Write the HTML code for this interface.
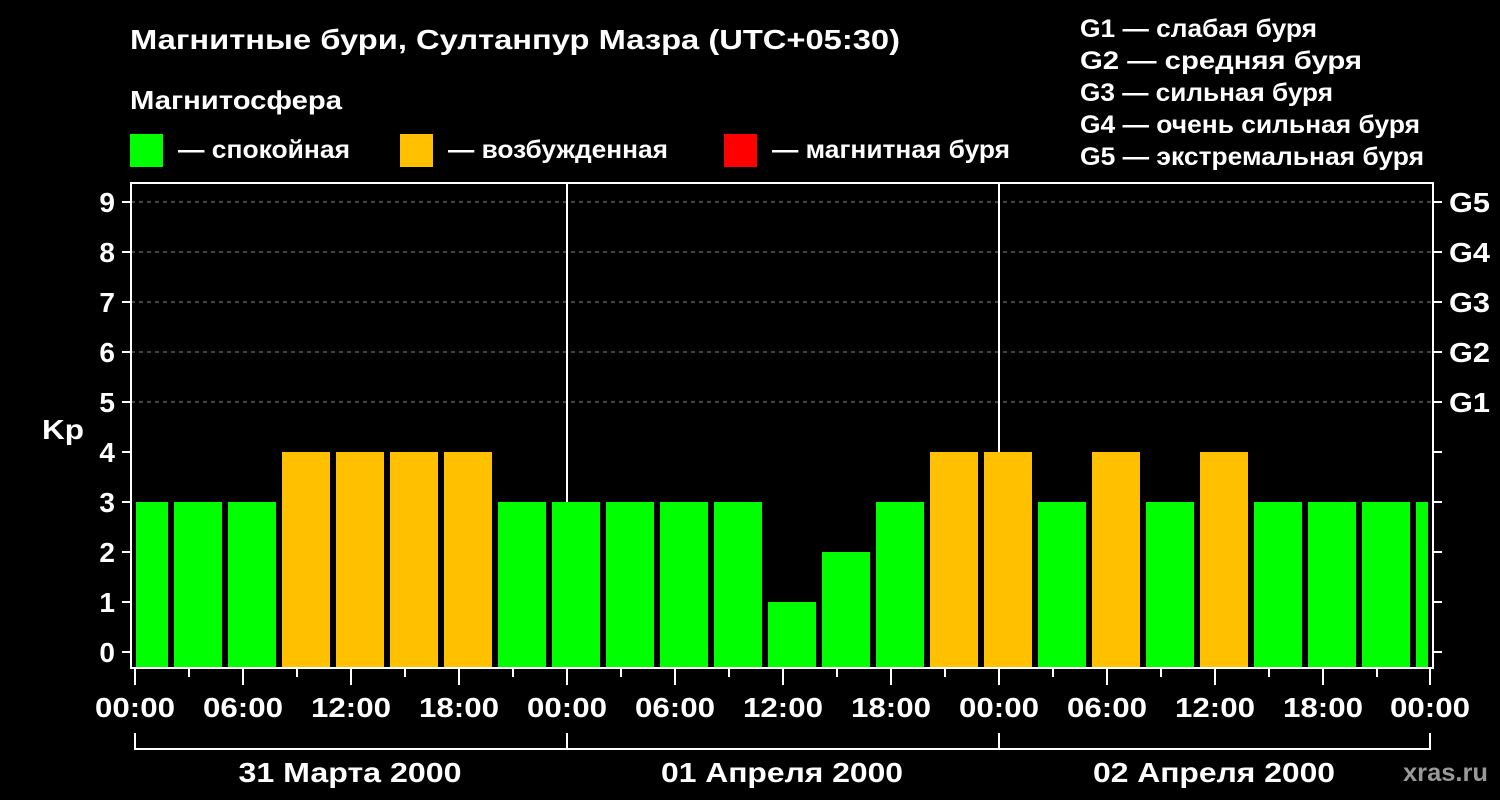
<!DOCTYPE html>
<html><head><meta charset="utf-8"><style>
html,body{margin:0;padding:0;background:#000;}
svg{display:block;font-family:"Liberation Sans",Arial,sans-serif;font-weight:bold;}
</style></head><body>
<svg width="1500" height="800" viewBox="0 0 1500 800" xmlns="http://www.w3.org/2000/svg">
<rect width="1500" height="800" fill="#000"/>
<text x="130" y="49" fill="#fff" font-size="28" textLength="770" lengthAdjust="spacingAndGlyphs">Магнитные бури, Султанпур Мазра (UTC+05:30)</text>
<text x="130" y="109" fill="#fff" font-size="26" textLength="212" lengthAdjust="spacingAndGlyphs">Магнитосфера</text>
<rect x="130" y="134" width="33" height="33" fill="#00ff00"/>
<text x="178" y="158" fill="#fff" font-size="25" textLength="172" lengthAdjust="spacingAndGlyphs">— спокойная</text>
<rect x="400" y="134" width="33" height="33" fill="#ffc000"/>
<text x="448" y="158" fill="#fff" font-size="25" textLength="220" lengthAdjust="spacingAndGlyphs">— возбужденная</text>
<rect x="724" y="134" width="33" height="33" fill="#ff0000"/>
<text x="772" y="158" fill="#fff" font-size="25" textLength="238" lengthAdjust="spacingAndGlyphs">— магнитная буря</text>
<g fill="#fff" font-size="25" lengthAdjust="spacingAndGlyphs">
<text x="1080" y="37" textLength="237" lengthAdjust="spacingAndGlyphs">G1 — слабая буря</text>
<text x="1080" y="69" textLength="282" lengthAdjust="spacingAndGlyphs">G2 — средняя буря</text>
<text x="1080" y="101" textLength="253" lengthAdjust="spacingAndGlyphs">G3 — сильная буря</text>
<text x="1080" y="133" textLength="340" lengthAdjust="spacingAndGlyphs">G4 — очень сильная буря</text>
<text x="1080" y="165" textLength="344" lengthAdjust="spacingAndGlyphs">G5 — экстремальная буря</text>
</g>
<g stroke="#888" stroke-dasharray="4,4" stroke-width="1">
<line x1="131" y1="202" x2="1433" y2="202"/><line x1="131" y1="252" x2="1433" y2="252"/>
<line x1="131" y1="302" x2="1433" y2="302"/><line x1="131" y1="352" x2="1433" y2="352"/>
<line x1="131" y1="402" x2="1433" y2="402"/>
</g>
<g>
<rect x="136" y="502" width="32" height="166" fill="#00ff00"/>
<rect x="174" y="502" width="48" height="166" fill="#00ff00"/>
<rect x="228" y="502" width="48" height="166" fill="#00ff00"/>
<rect x="282" y="452" width="48" height="216" fill="#ffc000"/>
<rect x="336" y="452" width="48" height="216" fill="#ffc000"/>
<rect x="390" y="452" width="48" height="216" fill="#ffc000"/>
<rect x="444" y="452" width="48" height="216" fill="#ffc000"/>
<rect x="498" y="502" width="48" height="166" fill="#00ff00"/>
<rect x="552" y="502" width="48" height="166" fill="#00ff00"/>
<rect x="606" y="502" width="48" height="166" fill="#00ff00"/>
<rect x="660" y="502" width="48" height="166" fill="#00ff00"/>
<rect x="714" y="502" width="48" height="166" fill="#00ff00"/>
<rect x="768" y="602" width="48" height="66" fill="#00ff00"/>
<rect x="822" y="552" width="48" height="116" fill="#00ff00"/>
<rect x="876" y="502" width="48" height="166" fill="#00ff00"/>
<rect x="930" y="452" width="48" height="216" fill="#ffc000"/>
<rect x="984" y="452" width="48" height="216" fill="#ffc000"/>
<rect x="1038" y="502" width="48" height="166" fill="#00ff00"/>
<rect x="1092" y="452" width="48" height="216" fill="#ffc000"/>
<rect x="1146" y="502" width="48" height="166" fill="#00ff00"/>
<rect x="1200" y="452" width="48" height="216" fill="#ffc000"/>
<rect x="1254" y="502" width="48" height="166" fill="#00ff00"/>
<rect x="1308" y="502" width="48" height="166" fill="#00ff00"/>
<rect x="1362" y="502" width="48" height="166" fill="#00ff00"/>
<rect x="1416" y="502" width="12" height="166" fill="#00ff00"/>
</g>
<g stroke="#fff" stroke-width="2" fill="none">
<rect x="131" y="183" width="1302" height="485"/>
<line x1="567" y1="183" x2="567" y2="502"/>
<line x1="999" y1="183" x2="999" y2="452"/>
</g>
<g stroke="#fff" stroke-width="2">
<path d="M122 202h9M122 252h9M122 302h9M122 352h9M122 402h9M122 452h9M122 502h9M122 552h9M122 602h9M122 652h9M1433 202h9M1433 252h9M1433 302h9M1433 352h9M1433 402h9M1433 452h9M1433 502h9M1433 552h9M1433 602h9M1433 652h9"/>
</g>
<g fill="#fff" font-size="28" text-anchor="end">
<text x="115" y="212">9</text><text x="115" y="262">8</text><text x="115" y="312">7</text>
<text x="115" y="362">6</text><text x="115" y="412">5</text><text x="115" y="462">4</text>
<text x="115" y="512">3</text><text x="115" y="562">2</text><text x="115" y="612">1</text>
<text x="115" y="662">0</text>
</g>
<text x="42" y="439" fill="#fff" font-size="28" textLength="42" lengthAdjust="spacingAndGlyphs">Kp</text>
<g fill="#fff" font-size="28">
<text x="1449" y="212" textLength="41" lengthAdjust="spacingAndGlyphs">G5</text><text x="1449" y="262" textLength="41" lengthAdjust="spacingAndGlyphs">G4</text><text x="1449" y="312" textLength="41" lengthAdjust="spacingAndGlyphs">G3</text>
<text x="1449" y="362" textLength="41" lengthAdjust="spacingAndGlyphs">G2</text><text x="1449" y="412" textLength="41" lengthAdjust="spacingAndGlyphs">G1</text>
</g>
<g stroke="#fff" stroke-width="2" fill="none">
<path d="M135 668v17M189 668v9M243 668v17M297 668v9M351 668v17M405 668v9M459 668v17M513 668v9M567 668v17M621 668v9M675 668v17M729 668v9M783 668v17M837 668v9M891 668v17M945 668v9M999 668v17M1053 668v9M1107 668v17M1161 668v9M1215 668v17M1269 668v9M1323 668v17M1377 668v9M1430 668v17"/>
<path d="M135 733v16H1430v-16M567 733v16M999 733v16"/>
</g>
<g fill="#fff" font-size="28" text-anchor="middle">
<text x="135" y="717" textLength="80" lengthAdjust="spacingAndGlyphs">00:00</text><text x="243" y="717" textLength="80" lengthAdjust="spacingAndGlyphs">06:00</text><text x="351" y="717" textLength="80" lengthAdjust="spacingAndGlyphs">12:00</text>
<text x="459" y="717" textLength="80" lengthAdjust="spacingAndGlyphs">18:00</text><text x="567" y="717" textLength="80" lengthAdjust="spacingAndGlyphs">00:00</text><text x="675" y="717" textLength="80" lengthAdjust="spacingAndGlyphs">06:00</text>
<text x="783" y="717" textLength="80" lengthAdjust="spacingAndGlyphs">12:00</text><text x="891" y="717" textLength="80" lengthAdjust="spacingAndGlyphs">18:00</text><text x="999" y="717" textLength="80" lengthAdjust="spacingAndGlyphs">00:00</text>
<text x="1107" y="717" textLength="80" lengthAdjust="spacingAndGlyphs">06:00</text><text x="1215" y="717" textLength="80" lengthAdjust="spacingAndGlyphs">12:00</text><text x="1323" y="717" textLength="80" lengthAdjust="spacingAndGlyphs">18:00</text>
<text x="1430" y="717" textLength="80" lengthAdjust="spacingAndGlyphs">00:00</text>
<text x="350" y="782" textLength="223" lengthAdjust="spacingAndGlyphs">31 Марта 2000</text>
<text x="782" y="782" textLength="242" lengthAdjust="spacingAndGlyphs">01 Апреля 2000</text>
<text x="1214" y="782" textLength="242" lengthAdjust="spacingAndGlyphs">02 Апреля 2000</text>
</g>
<text x="1403" y="781" fill="#999" font-size="25" textLength="85" lengthAdjust="spacingAndGlyphs">xras.ru</text>
</svg>
</body></html>
